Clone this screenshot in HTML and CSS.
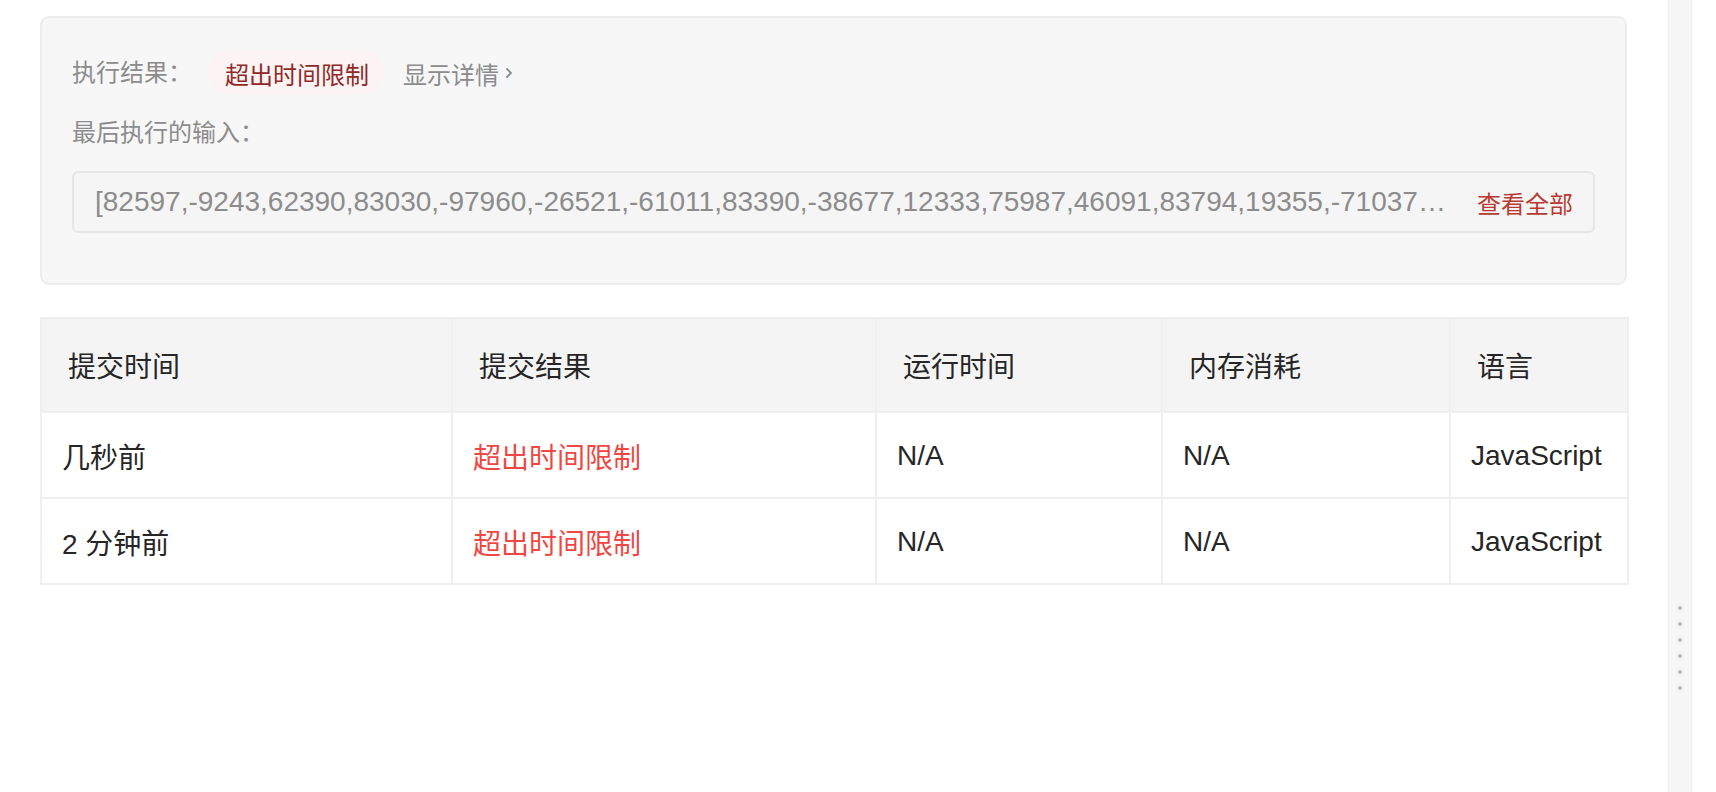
FILE: index.html
```html
<!DOCTYPE html>
<html lang="zh-CN">
<head>
<meta charset="utf-8">
<title>提交记录</title>
<link rel="stylesheet" href="styles.css">
</head>
<body>
<div class="layout">
  <main class="main">
    <section class="result-box">
      <div class="result-row">
        <span class="label">执行结果：</span>
        <span class="badge">超出时间限制</span>
        <a class="detail-link">显示详情
          <svg class="chev" width="10" height="14" viewBox="0 0 10 14"><path d="M3 3 L7 7 L3 11" fill="none" stroke="#8c8c8c" stroke-width="1.8" stroke-linecap="round" stroke-linejoin="round"/></svg>
        </a>
      </div>
      <div class="label last-input">最后执行的输入：</div>
      <div class="input-box">
        <span class="input-text">[82597,-9243,62390,83030,-97960,-26521,-61011,83390,-38677,12333,75987,46091,83794,19355,-71037,55281,-31544,90012,-4458,17723,-88201]</span>
        <a class="view-all">查看全部</a>
      </div>
    </section>

    <table class="subs">
      <colgroup>
        <col class="c1"><col class="c2"><col class="c3"><col class="c4"><col class="c5">
      </colgroup>
      <thead>
        <tr>
          <th>提交时间</th>
          <th>提交结果</th>
          <th>运行时间</th>
          <th>内存消耗</th>
          <th>语言</th>
        </tr>
      </thead>
      <tbody>
        <tr>
          <td>几秒前</td>
          <td class="tle">超出时间限制</td>
          <td>N/A</td>
          <td>N/A</td>
          <td>JavaScript</td>
        </tr>
        <tr>
          <td>2 分钟前</td>
          <td class="tle">超出时间限制</td>
          <td>N/A</td>
          <td>N/A</td>
          <td>JavaScript</td>
        </tr>
      </tbody>
    </table>
  </main>
  <div class="gutter">
    <div class="grip">
      <span class="dot"></span><span class="dot"></span><span class="dot"></span>
      <span class="dot"></span><span class="dot"></span><span class="dot"></span>
    </div>
  </div>
  <div class="right-pane"></div>
</div>
</body>
</html>
```

FILE: styles.css
```css
html, body {
  margin: 0;
  padding: 0;
  background: #ffffff;
  height: 100%;
}

body {
  font-family: "Liberation Sans", "Noto Sans CJK SC", sans-serif;
  color: #262626;
  overflow: hidden;
}

.layout {
  display: flex;
  height: 792px;
}

.main {
  flex: 1;
  min-width: 0;
  padding: 16px 41px 0 40px;
}

.result-box {
  background: #f7f7f7;
  border: 2px solid #ededed;
  border-radius: 9px;
  padding: 33px 30px 50px 30px;
}

.result-row {
  display: flex;
  align-items: center;
  height: 44px;
}

.label {
  font-size: 24px;
  line-height: 32px;
  color: #8c8c8c;
}

.result-row .label {
  width: 136px;
  flex: none;
}

.badge {
  display: inline-flex;
  align-items: center;
  height: 44px;
  padding: 0 16px 0 17px;
  border-radius: 22px;
  background: #fcf4f4;
  color: #8f2a28;
  font-size: 24px;
}

.detail-link {
  display: inline-flex;
  align-items: center;
  margin-left: 18px;
  font-size: 24px;
  color: #8c8c8c;
}

.chev {
  margin-left: 5px;
}

.last-input {
  margin-top: 22px;
}

.input-box {
  display: flex;
  align-items: center;
  height: 58px;
  margin-top: 22px;
  padding: 0 20px 0 21px;
  background: #f5f5f5;
  border: 2px solid #e6e6e6;
  border-radius: 6px;
}

.input-text {
  flex: 1;
  min-width: 0;
  overflow: hidden;
  white-space: nowrap;
  text-overflow: ellipsis;
  font-size: 28px;
  color: #8c8c8c;
  margin-right: 30px;
}

.view-all {
  flex: none;
  font-size: 24px;
  color: #b83b33;
}

.subs {
  width: 100%;
  margin-top: 32px;
  border-collapse: collapse;
  table-layout: fixed;
  font-size: 28px;
}

.subs th, .subs td {
  border: 2px solid #efefef;
  text-align: left;
  font-weight: normal;
  white-space: nowrap;
}

.subs th {
  height: 92px;
  background: #f4f4f4;
  padding: 0 0 0 26px;
  color: #262626;
}

.subs td {
  height: 82px;
  padding: 2px 0 0 20px;
  background: #ffffff;
  color: #262626;
}

.subs td.tle {
  color: #ef4743;
}

.c1 { width: 411px; }
.c2 { width: 424px; }
.c3 { width: 286px; }
.c4 { width: 288px; }
.c5 { width: 178px; }

.gutter {
  flex: none;
  width: 22px;
  background: #f7f7f7;
  border-left: 1px solid #efefef;
  border-right: 1px solid #efefef;
  display: flex;
  justify-content: center;
}

.grip {
  margin-top: 606px;
  display: flex;
  flex-direction: column;
  gap: 12px;
}

.dot {
  display: block;
  width: 4px;
  height: 4px;
  border-radius: 50%;
  background: #b8b8b8;
}

.right-pane {
  flex: none;
  width: 24px;
  background: #ffffff;
}
```
